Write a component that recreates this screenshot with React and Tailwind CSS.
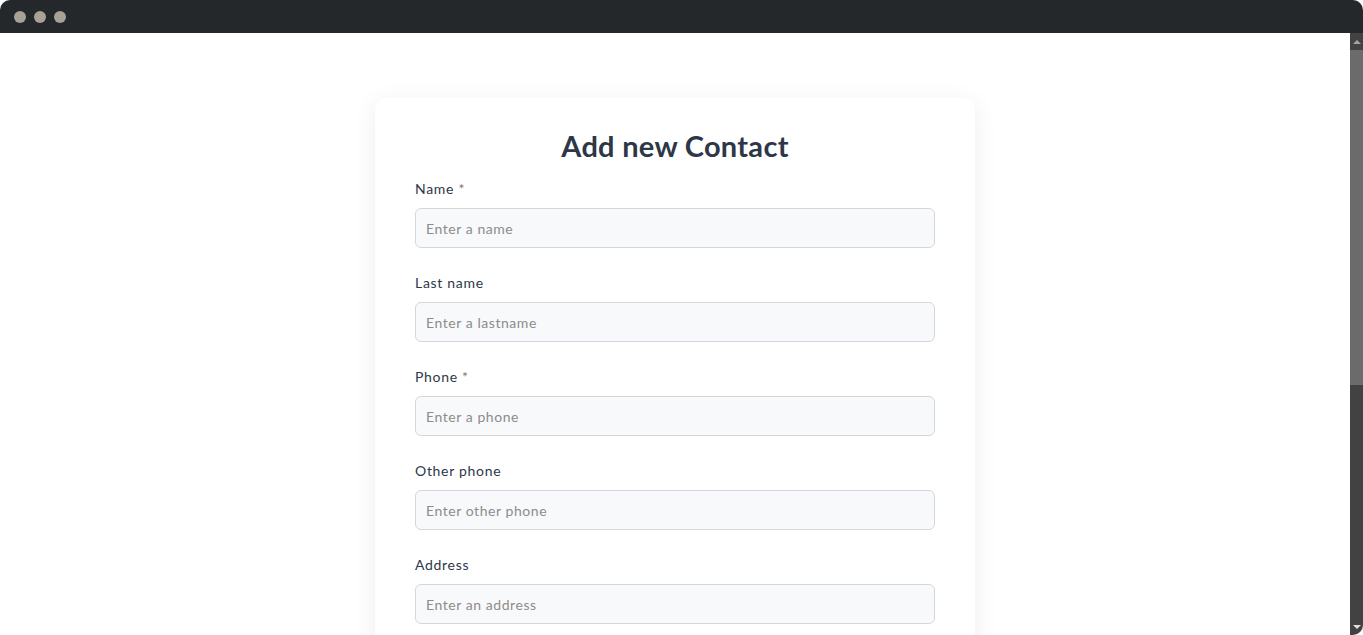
import React from "react";

const fields = [
  { label: "Name", required: true, placeholder: "Enter a name" },
  { label: "Last name", required: false, placeholder: "Enter a lastname" },
  { label: "Phone", required: true, placeholder: "Enter a phone" },
  { label: "Other phone", required: false, placeholder: "Enter other phone" },
  { label: "Address", required: false, placeholder: "Enter an address" },
];

const App = () => {
  return (
    <div className="h-screen w-full bg-white overflow-hidden flex flex-col font-['Lato','Open_Sans',sans-serif]">
      {/* barra de la ventana */}
      <div className="h-[33px] shrink-0 bg-[#25282b] rounded-t-[10px] flex items-center gap-2 pl-[14px]">
        <span className="w-3 h-3 rounded-full bg-[#a8a196]" />
        <span className="w-3 h-3 rounded-full bg-[#a8a196]" />
        <span className="w-3 h-3 rounded-full bg-[#a8a196]" />
      </div>

      <div className="flex flex-1 min-h-0 rounded-br-[10px] overflow-hidden">
        {/* contenido */}
        <div className="flex-1 bg-white pt-[65px] overflow-hidden">
          <div className="w-[600px] mx-auto bg-white rounded-xl shadow-[0_4px_24px_rgba(0,0,0,0.07)] px-10 pt-[30px] pb-10">
            <h1 className="text-center text-[29px] leading-9 font-bold tracking-[0.01em] text-[#2d3748]">
              Add new Contact
            </h1>

            <form className="mt-[15px]">
              {fields.map((f) => (
                <div key={f.label} className="mb-[25px]">
                  <label className="block text-sm leading-5 mb-[9px] tracking-[0.05em] text-[#2d3748]">
                    {f.label}
                    {f.required && <span className="text-[#8b6f7a]"> *</span>}
                  </label>
                  <input
                    type="text"
                    placeholder={f.placeholder}
                    className="w-full h-10 px-[10px] text-sm tracking-[0.04em] bg-[#f8f9fb] border border-[#d3d6dc] rounded-md placeholder:text-[#8c8c8c] outline-none"
                  />
                </div>
              ))}
            </form>
          </div>
        </div>

        {/* barra de desplazamiento */}
        <div className="w-[13px] shrink-0 bg-[#424242] flex flex-col items-center">
          <div className="h-[17px] flex items-center justify-center">
            <div className="w-0 h-0 border-l-[4px] border-r-[4px] border-b-[4px] border-l-transparent border-r-transparent border-b-[#a3a3a3]" />
          </div>
          <div className="w-full h-[335px] bg-[#6b6b6b]" />
          <div className="flex-1" />
          <div className="h-[17px] flex items-center justify-center">
            <div className="w-0 h-0 border-l-[4px] border-r-[4px] border-t-[4px] border-l-transparent border-r-transparent border-t-[#e0e0e0]" />
          </div>
        </div>
      </div>
    </div>
  );
};

export default App;
